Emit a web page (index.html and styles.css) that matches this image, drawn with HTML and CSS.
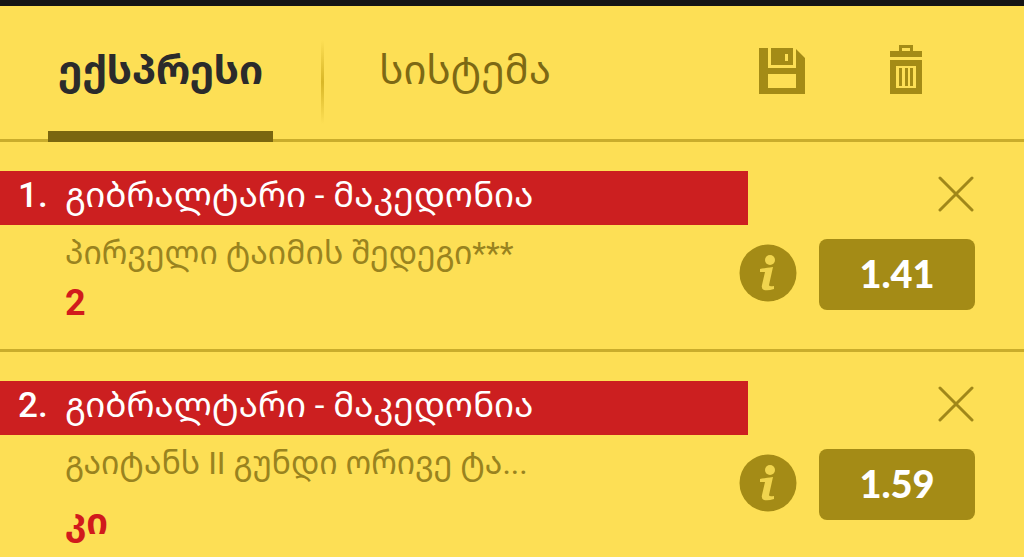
FILE: index.html
```html
<!DOCTYPE html>
<html lang="ka">
<head>
  <meta charset="UTF-8" />
  <meta name="viewport" content="width=device-width, initial-scale=1" />
  <title>ბილეთი</title>
  <link rel="stylesheet" href="styles.css">
</head>
<body>

  <header class="slip-header">
    <nav class="tabs">
      <button class="tab active">ექსპრესი</button>
      <span class="divider"></span>
      <button class="tab">სისტემა</button>
    </nav>
    <div class="tools">
      <button class="icon-btn" aria-label="შენახვა">
        <svg width="46" height="46" viewBox="0 0 46 46">
          <path fill="#a48b16" fill-rule="evenodd" d="M0 0H9V20H37V1L46 10V46H0ZM9 26V40H37V26Z" />
          <path fill="#a48b16" fill-rule="evenodd" d="M12 0H34V17H12ZM26 6V13H29V6Z" />
        </svg>
      </button>
      <button class="icon-btn" aria-label="წაშლა">
        <svg width="32" height="49" viewBox="0 0 32 49">
          <path fill="#a48b16" fill-rule="evenodd" d="M9 0H23V6H32V12H0V6H9ZM12 3V6H20V3Z" />
          <path fill="#a48b16" fill-rule="evenodd" d="M0 15H32V49H0ZM6 21V43H26V21Z" />
          <path fill="#a48b16" d="M9 23h3v18H9zM15 23h3v18h-3zM20 23h3v18h-3z" />
        </svg>
      </button>
    </div>
  </header>

  <main class="bets">
    <article class="bet">
      <div class="bet-top">
        <h2 class="match"><span class="num">1.</span>გიბრალტარი - მაკედონია</h2>
        <button class="icon-btn" aria-label="წაშლა">
          <svg width="36" height="36" viewBox="0 0 36 36">
            <path stroke="#a08719" stroke-width="3" stroke-linecap="round" d="M2 2L34 34M34 2L2 34" />
          </svg>
        </button>
      </div>
      <div class="bet-body">
        <div class="bet-info">
          <p class="market">პირველი ტაიმის შედეგი***</p>
          <p class="pick">2</p>
        </div>
        <button class="icon-btn" aria-label="ინფორმაცია">
          <svg width="58" height="58" viewBox="0 0 58 58">
            <circle cx="29" cy="29" r="28.5" fill="#a48b16" />
            <circle cx="31" cy="16" r="5" fill="#f0d44e" />
            <path fill="#f0d44e" d="M21 25C25 24 29 24 34 23L30 41Q30 43 35 42V45Q29 47 25 46Q22 45 23 41L26 28L21 28Z" />
          </svg>
        </button>
        <button class="odds">1.41</button>
      </div>
    </article>

    <article class="bet">
      <div class="bet-top">
        <h2 class="match"><span class="num">2.</span>გიბრალტარი - მაკედონია</h2>
        <button class="icon-btn" aria-label="წაშლა">
          <svg width="36" height="36" viewBox="0 0 36 36">
            <path stroke="#a08719" stroke-width="3" stroke-linecap="round" d="M2 2L34 34M34 2L2 34" />
          </svg>
        </button>
      </div>
      <div class="bet-body">
        <div class="bet-info">
          <p class="market">გაიტანს II გუნდი ორივე ტა...</p>
          <p class="pick pick-word">კი</p>
        </div>
        <button class="icon-btn" aria-label="ინფორმაცია">
          <svg width="58" height="58" viewBox="0 0 58 58">
            <circle cx="29" cy="29" r="28.5" fill="#a48b16" />
            <circle cx="31" cy="16" r="5" fill="#f0d44e" />
            <path fill="#f0d44e" d="M21 25C25 24 29 24 34 23L30 41Q30 43 35 42V45Q29 47 25 46Q22 45 23 41L26 28L21 28Z" />
          </svg>
        </button>
        <button class="odds">1.59</button>
      </div>
    </article>
  </main>

</body>
</html>
```
FILE: styles.css
```css
* {
  box-sizing: border-box;
}

body {
  margin: 0;
  border-top: 6px solid #151515;
  font-family: Roboto, "Noto Sans Georgian", "DejaVu Sans", sans-serif;
  background-color: #fddf55;
}

button {
  border: none;
  padding: 0;
  background: none;
  font-family: inherit;
  cursor: pointer;
}

svg {
  display: block;
}

/* Header */
.slip-header {
  display: flex;
  justify-content: space-between;
  height: 136px;
  padding: 0 102px 0 48px;
  border-bottom: 3px solid #c9ac2c;
}

.tabs {
  display: flex;
  height: 136px;
}

.tab {
  padding: 0 10px;
  border-bottom: 11px solid transparent;
  font-size: 40px;
  color: #7d6914;
  text-transform: uppercase;
}

.tab.active {
  border-bottom-color: #7a660f;
  font-weight: bold;
  color: #2b2b2b;
}

.divider {
  width: 3px;
  height: 84px;
  margin: 34px 45px 0 48px;
  background: linear-gradient(transparent, #d9b728, transparent);
}

.tools {
  display: flex;
  align-items: flex-end;
  gap: 85px;
  height: 88px;
}

/* Bets */
.bet {
  padding: 29px 0 18px;
  border-bottom: 3px solid #c9ac2c;
}

.bet:last-child {
  padding-bottom: 0;
  border-bottom: none;
}

.bet-top {
  display: flex;
  align-items: flex-start;
  padding-right: 50px;
}

.match {
  display: flex;
  flex: 1;
  margin: 0 190px 0 0;
  padding: 0 0 4px 18px;
  font-size: 35px;
  line-height: 50px;
  font-weight: normal;
  background-color: #cc1f20;
  color: white;
}

.num {
  width: 47px;
  font-weight: 500;
}

.bet-top .icon-btn {
  margin-top: 5px;
}

.bet-body {
  display: flex;
  align-items: flex-start;
  padding: 6px 49px 0 65px;
}

.bet-body .icon-btn {
  margin: 13px 22px 0 0;
}

.bet-info {
  flex: 1;
  min-width: 0;
}

.market {
  margin: 0;
  font-size: 32px;
  line-height: 44px;
  color: #99831f;
}

.pick {
  margin: 0;
  font-size: 36px;
  line-height: 56px;
  font-weight: bold;
  color: #d11a1c;
}

.pick-word {
  line-height: 74px;
}

.odds {
  width: 156px;
  height: 71px;
  margin-top: 8px;
  padding-bottom: 4px;
  border-radius: 8px;
  font-family: Lato, sans-serif;
  font-size: 38px;
  font-weight: 900;
  background-color: #a48b16;
  color: white;
}
```
